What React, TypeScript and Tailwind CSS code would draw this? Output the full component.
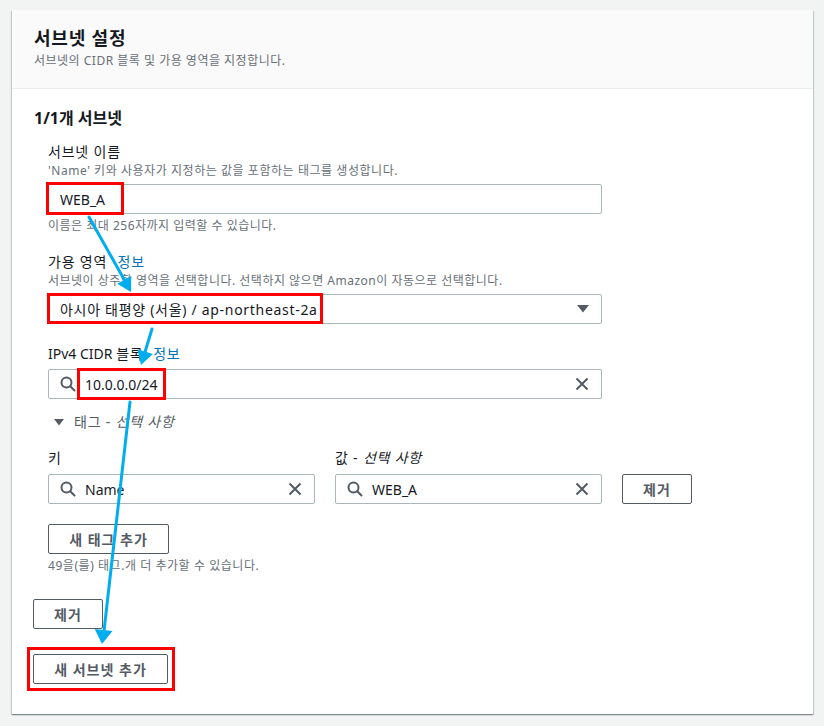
import React from "react";

function SearchIcon() {
  return (
    <svg width="16" height="16" viewBox="0 0 16 16" fill="none" stroke="#545b64" strokeWidth="2">
      <circle cx="6.5" cy="6.5" r="5" />
      <path d="M10.2 10.2 L14.5 14.5" strokeLinecap="round" />
    </svg>
  );
}

function ClearIcon() {
  return (
    <svg width="14" height="14" viewBox="0 0 14 14" fill="none" stroke="#545b64" strokeWidth="2">
      <path d="M1.5 1.5 L12.5 12.5 M12.5 1.5 L1.5 12.5" />
    </svg>
  );
}

function Caret() {
  return (
    <svg width="12" height="8" viewBox="0 0 12 8">
      <path d="M0 0 H12 L6 7.5 Z" fill="#545b64" />
    </svg>
  );
}

function SearchInput({ value, className }: { value: string; className: string }) {
  return (
    <div className={`h-[30px] border border-[#aab7b8] rounded-[2px] bg-white flex items-center pl-[11px] pr-[12px] ${className}`}>
      <SearchIcon />
      <span className="ml-[9px] flex-1 text-[14px] text-[#16191f]">{value}</span>
      <ClearIcon />
    </div>
  );
}

function Button({ label, className }: { label: string; className: string }) {
  return (
    <button className={`h-[30px] border border-[#545b64] rounded-[2px] bg-white text-[14px] tracking-[1px] font-bold text-[#545b64] ${className}`}>
      {label}
    </button>
  );
}

function Overlay() {
  const blue = "#00aeef";
  return (
    <svg className="absolute left-0 top-0 pointer-events-none" width="824" height="726">
      <g fill="none" stroke="#ff0000" strokeWidth="3">
        <rect x="47.5" y="183.5" width="75" height="30" />
        <rect x="48.5" y="294.5" width="273" height="28" />
        <rect x="78.5" y="369.5" width="86" height="29" />
        <rect x="28.5" y="648.5" width="145" height="41" />
      </g>
      <g stroke={blue} strokeWidth="3" strokeLinecap="round">
        <line x1="89" y1="217" x2="125" y2="281" />
        <line x1="152" y1="329" x2="145" y2="352" />
        <line x1="130" y1="402" x2="104" y2="631" />
      </g>
      <g fill={blue}>
        <polygon points="131,292 117.2,283.7 131.2,275.9" />
        <polygon points="141,365 137.4,349.3 152.8,353.9" />
        <polygon points="102,644 94.7,629.1 112.5,631.1" />
      </g>
    </svg>
  );
}

export default function App() {
  return (
    <div
      className="relative w-[824px] h-[726px] bg-[#f2f3f3] overflow-hidden"
      style={{ fontFamily: '"Noto Sans", "Noto Sans CJK KR", sans-serif' }}
    >
      <div className="pt-[10px] pl-[12px]">
        <div className="w-[801px] h-[704px] bg-white shadow-[0_1px_1px_0_rgba(0,28,36,0.3),1px_1px_1px_0_rgba(0,28,36,0.15),-1px_1px_1px_0_rgba(0,28,36,0.15)] flex flex-col">
          {/* 헤더 */}
          <div className="h-[79px] bg-[#fafafa] border-b border-[#eaeded] pl-[22px] pt-[17px]">
            <h2 className="text-[18px] leading-[22px] tracking-[0.8px] font-bold text-[#16191f]">서브넷 설정</h2>
            <p className="mt-[4px] text-[12px] leading-[16px] tracking-[0.5px] text-[#687078]">서브넷의 CIDR 블록 및 가용 영역을 지정합니다.</p>
          </div>

          {/* 본문 */}
          <div className="pl-[21px] pt-[19px]">
            <h3 className="pl-[1px] text-[16px] leading-[20px] font-bold text-[#16191f]">1/1개 서브넷</h3>

            <div className="pl-[15px]">
              <div className="mt-[14px] text-[14px] leading-[20px] tracking-[0.8px] text-[#16191f]">서브넷 이름</div>
              <div className="mt-[1px] text-[12px] leading-[16px] tracking-[0.55px] text-[#687078]">'Name' 키와 사용자가 지정하는 값을 포함하는 태그를 생성합니다.</div>
              <div className="mt-[5px] w-[554px] h-[30px] border border-[#aab7b8] rounded-[2px] flex items-center pl-[11px] text-[14px] text-[#16191f]">
                WEB_A
              </div>
              <div className="mt-[4px] text-[12px] leading-[16px] tracking-[0.5px] text-[#687078]">이름은 최대 256자까지 입력할 수 있습니다.</div>

              <div className="mt-[18px] text-[14px] leading-[20px] tracking-[0.8px] text-[#16191f]">
                가용 영역 <span className="ml-[6px] text-[#0073bb]">정보</span>
              </div>
              <div className="mt-[1px] text-[12px] leading-[16px] tracking-[0.5px] text-[#687078]">
                서브넷이 상주할 영역을 선택합니다. 선택하지 않으면 Amazon이 자동으로 선택합니다.
              </div>
              <div className="mt-[5px] w-[554px] h-[30px] border border-[#aab7b8] rounded-[2px] flex items-center justify-between pl-[11px] pr-[12px] text-[14px] text-[#16191f]">
                <span className="tracking-[0.7px]">아시아 태평양 (서울) / ap-northeast-2a</span>
                <Caret />
              </div>

              <div className="mt-[20px] text-[14px] leading-[20px] text-[#16191f]">
                IPv4 CIDR <span className="tracking-[0.8px]">블록</span> <span className="ml-[6px] tracking-[0.8px] text-[#0073bb]">정보</span>
              </div>
              <SearchInput value="10.0.0.0/24" className="mt-[5px] w-[554px]" />

              <div className="mt-[13px] flex items-center text-[14px] leading-[20px] tracking-[0.8px] text-[#545b64]">
                <svg width="10" height="7" viewBox="0 0 10 7" className="ml-[6px] mr-[10px]">
                  <path d="M0 0 H10 L5 6.5 Z" fill="#545b64" />
                </svg>
                <span>
                  태그 - <i>선택 사항</i>
                </span>
              </div>

              <div className="mt-[16px] flex gap-[20px]">
                <div className="w-[267px]">
                  <div className="text-[14px] leading-[20px] text-[#16191f]">키</div>
                  <SearchInput value="Name" className="mt-[6px] w-[267px]" />
                </div>
                <div className="w-[267px]">
                  <div className="text-[14px] leading-[20px] tracking-[0.8px] text-[#16191f]">
                    값 - <i>선택 사항</i>
                  </div>
                  <SearchInput value="WEB_A" className="mt-[6px] w-[267px]" />
                </div>
                <div className="pt-[26px]">
                  <Button label="제거" className="w-[70px]" />
                </div>
              </div>

              <Button label="새 태그 추가" className="mt-[20px] w-[121px]" />
              <div className="mt-[4px] text-[12px] leading-[16px] tracking-[0.55px] text-[#687078]">49을(를) 태그.개 더 추가할 수 있습니다.</div>
            </div>

            <div className="flex flex-col items-start">
              <Button label="제거" className="mt-[25px] w-[70px]" />
              <Button label="새 서브넷 추가" className="mt-[25px] w-[135px]" />
            </div>
          </div>
        </div>
      </div>
      <Overlay />
    </div>
  );
}
